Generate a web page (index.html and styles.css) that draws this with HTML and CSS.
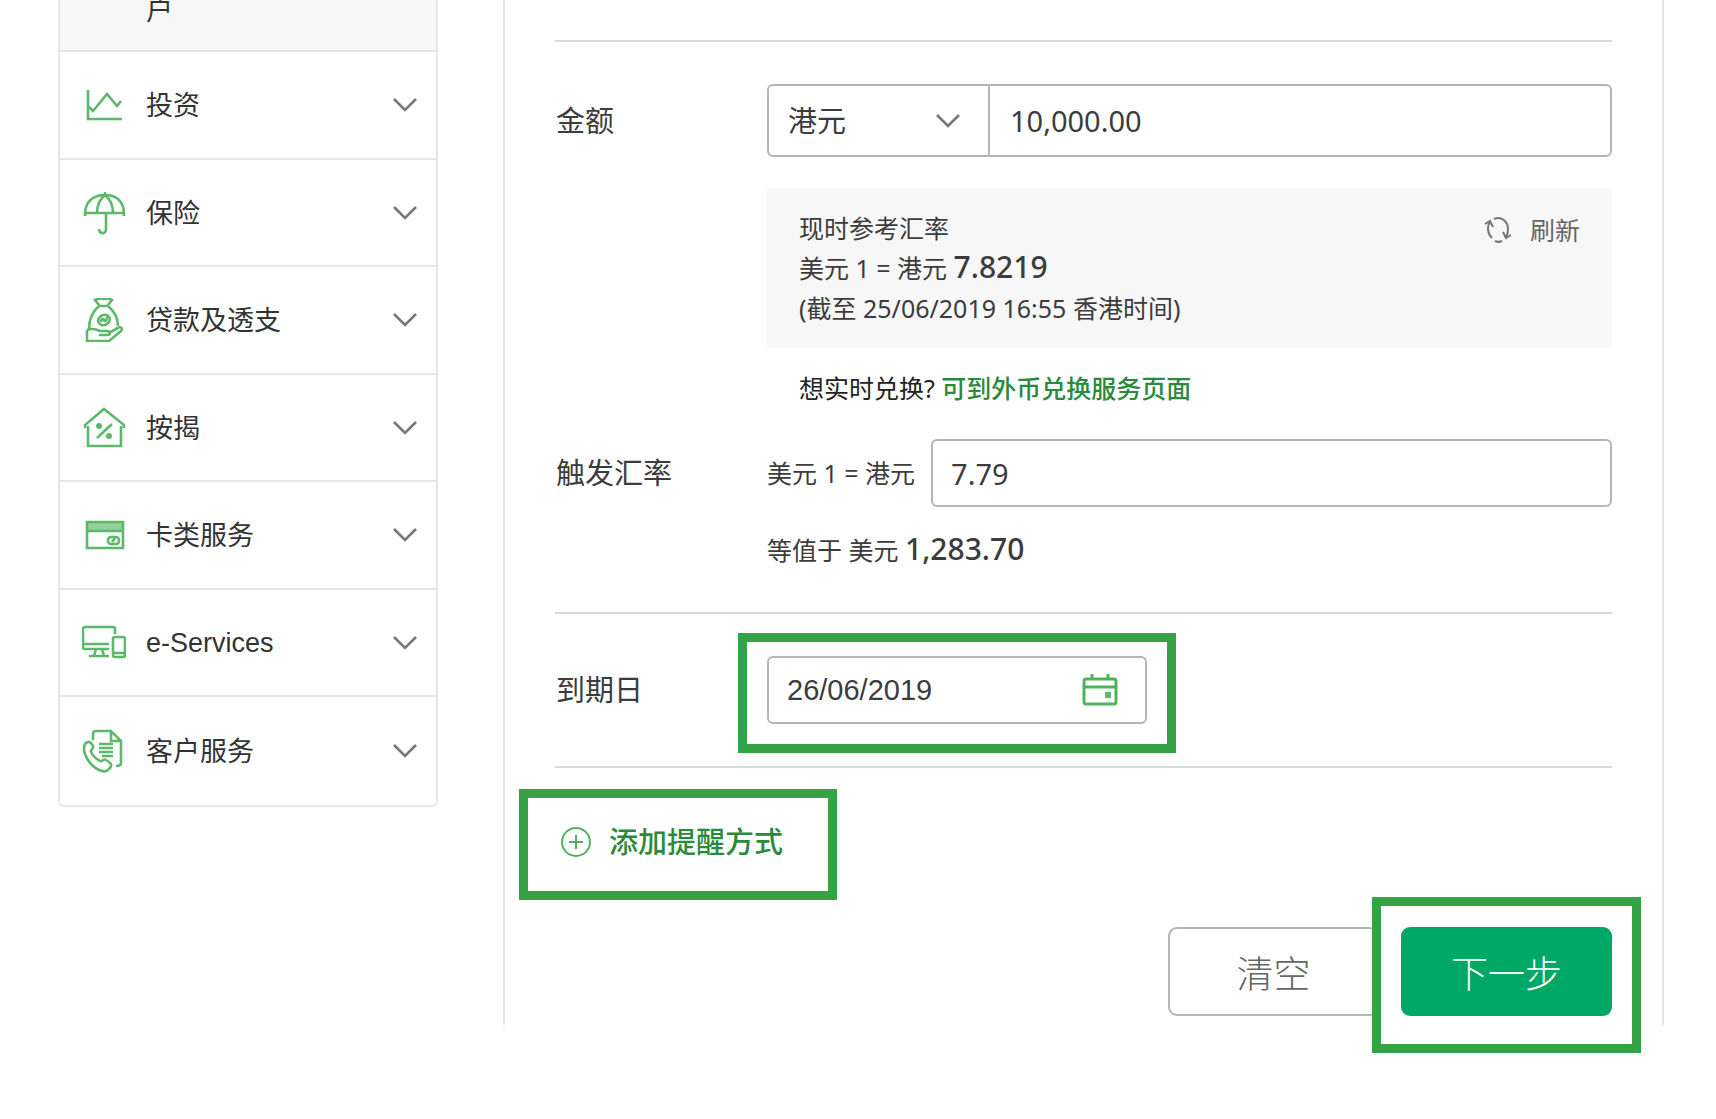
FILE: index.html
```html
<!DOCTYPE html>
<html lang="zh-CN">
<head>
    <meta charset="UTF-8">
    <meta name="viewport" content="width=device-width, initial-scale=1.0">
    <title>外币兑换</title>
    <link rel="stylesheet" href="styles.css">
</head>
<body>
    <!-- Chevron shared by the menu and the drop-down -->
    <svg class="symbols" aria-hidden="true">
        <symbol id="chevron" viewBox="0 0 24 16">
            <path d="M1 2 L12 13 L23 2" fill="none" stroke="#777" stroke-width="2.6"/>
        </symbol>
    </svg>

    <div class="page">
        <nav class="sidebar">
            <a class="menu-item active" href="#"><span class="menu-text">户</span></a>
            <a class="menu-item" href="#">
                <svg class="menu-icon" viewBox="0 0 44 44">
                    <path d="M6 7v29h34M6 23l5 5L25 11l10 12 4-5"/>
                </svg>
                <span class="menu-text">投资</span>
                <svg class="chevron"><use href="#chevron"/></svg>
            </a>
            <a class="menu-item" href="#">
                <svg class="menu-icon" viewBox="0 0 44 44">
                    <path d="M3 25v-2C3 11 11 4 23 4s19 7 19 19v2M3 22h39M23 1v3M24 22v16c0 6-7 5-7 0M15 22c0-9 3-14 8-18 5 4 8 9 8 18"/>
                </svg>
                <span class="menu-text">保险</span>
                <svg class="chevron"><use href="#chevron"/></svg>
            </a>
            <a class="menu-item" href="#">
                <svg class="menu-icon" viewBox="0 0 44 44">
                    <path d="M17 7l-4-5q4-2 9-1 5-1 8 1l-4 5M17 8h9M17 8C10 14 7 22 7 31M26 8c7 6 10 13 10 20"/>
                    <ellipse cx="22" cy="22" rx="6" ry="5" transform="rotate(-25 22 22)"/>
                    <path d="M19 24q1-5 3-2t3-3"/>
                    <path d="M5 32c5-2 9-1 13 1h7c4 0 4 4 0 4h-8M27 35l9-5c3-2 5 1 3 3L27 43H5V32"/>
                </svg>
                <span class="menu-text">贷款及透支</span>
                <svg class="chevron"><use href="#chevron"/></svg>
            </a>
            <a class="menu-item" href="#">
                <svg class="menu-icon" viewBox="0 0 44 44">
                    <path d="M6 20v20h33V20M3 22v-3L22 3l20 16v3M15 32l15-14"/>
                    <circle class="solid" cx="17" cy="20" r="3"/>
                    <circle class="solid" cx="27" cy="30" r="3"/>
                </svg>
                <span class="menu-text">按揭</span>
                <svg class="chevron"><use href="#chevron"/></svg>
            </a>
            <a class="menu-item" href="#">
                <svg class="menu-icon" viewBox="0 0 44 44">
                    <path class="tint" d="M5 9h36v9H5z"/>
                    <path d="M5 9h36v26H5zM5 18h36"/>
                    <rect x="26" y="24" width="11" height="7" rx="3"/>
                    <path d="M30 29l3-4"/>
                </svg>
                <span class="menu-text">卡类服务</span>
                <svg class="chevron"><use href="#chevron"/></svg>
            </a>
            <a class="menu-item" href="#">
                <svg class="menu-icon" viewBox="0 0 44 44">
                    <path d="M33 13V8q0-2-2-2H3Q1 6 1 8v18q0 2 2 2h24M1 23h26M14 28l-2 7M20 28l2 7M7 35h20"/>
                    <rect x="31" y="16" width="12" height="20" rx="2"/>
                    <path d="M31 32h12"/>
                </svg>
                <span class="menu-text latin">e-Services</span>
                <svg class="chevron"><use href="#chevron"/></svg>
            </a>
            <a class="menu-item" href="#">
                <svg class="menu-icon" viewBox="0 0 44 44">
                    <path d="M11 11V5q0-3 3-3h15l10 10v22q0 3-5 3M29 2v10h9M17 15h14M17 19h14M17 23h14M20 27h11"/>
                    <path d="M3 15c3-4 6-2 8 2 1 3-3 4-2 6 2 4 5 7 9 9 3 1 3-3 6-1 5 3 7 5 3 9-4 5-12 1-17-4C4 30 0 21 3 15z"/>
                </svg>
                <span class="menu-text">客户服务</span>
                <svg class="chevron"><use href="#chevron"/></svg>
            </a>
        </nav>

        <form class="panel">
            <div class="section">
                <div class="row">
                    <label class="label" for="amount">金额</label>
                    <div class="field amount-field">
                        <div class="currency">
                            <select id="currency" aria-label="货币">
                                <option>港元</option>
                            </select>
                            <svg class="chevron"><use href="#chevron"/></svg>
                        </div>
                        <input class="amount-input" type="text" id="amount" value="10,000.00">
                    </div>
                </div>
                <div class="indent">
                    <div class="rate-box">
                        <div>
                            <p>现时参考汇率</p>
                            <p>美元 1 = 港元 <strong>7.8219</strong></p>
                            <p>(截至 25/06/2019 16:55 香港时间)</p>
                        </div>
                        <button type="button" class="refresh">
                            <svg class="refresh-icon" viewBox="0 0 28 28">
                                <path d="M8 22C3 17 3 10 6 6M1 8l5-3 3 6M10 3c7-3 14 2 14 10 0 3 0 5-2 8M27 19l-5 3-3-6M18 25c-2 1-5 1-7 0"/>
                            </svg>
                            刷新
                        </button>
                    </div>
                    <p class="hint">想实时兑换? <a href="#">可到外币兑换服务页面</a></p>
                </div>
                <div class="row">
                    <label class="label" for="trigger">触发汇率</label>
                    <div class="trigger">
                        <span>美元 1 = 港元</span>
                        <input class="field" type="text" id="trigger" value="7.79">
                    </div>
                </div>
                <div class="indent">
                    <p class="equivalent">等值于 美元 <strong>1,283.70</strong></p>
                </div>
            </div>

            <div class="section">
                <div class="row">
                    <label class="label" for="expiry">到期日</label>
                    <div class="highlight date-highlight">
                        <div class="field date-field">
                            <input type="text" id="expiry" value="26/06/2019">
                            <button type="button" aria-label="选择日期">
                                <svg class="calendar-icon" viewBox="0 0 36 32">
                                    <rect x="2" y="5" width="32" height="25" rx="2"/>
                                    <path d="M2 13h32M10 0v5M26 0v5"/>
                                    <rect class="solid" x="23" y="18" width="6" height="6"/>
                                </svg>
                            </button>
                        </div>
                    </div>
                </div>
            </div>

            <div class="section last">
                <div class="highlight reminder-highlight">
                    <button type="button" class="reminder">
                        <svg class="plus-icon" viewBox="0 0 30 30">
                            <circle cx="15" cy="15" r="14"/>
                            <path d="M15 8v14M8 15h14"/>
                        </svg>
                        添加提醒方式
                    </button>
                </div>
                <div class="actions">
                    <button type="reset" class="btn btn-clear">清空</button>
                    <div class="highlight next-highlight">
                        <button type="button" class="btn btn-next">下一步</button>
                    </div>
                </div>
            </div>
        </form>
    </div>
</body>
</html>
```

FILE: styles.css
```css
* {
    box-sizing: border-box;
}
body {
    margin: 0;
    min-height: 100vh;
    background-color: #fff;
    color: #3c3c3c;
    font-family: "Noto Sans", "Noto Sans CJK SC", sans-serif;
    font-size: 25px;
    line-height: 40px;
}
p {
    margin: 0;
}
strong {
    font-size: 30px;
    font-weight: 500;
    line-height: 30px;
}
button,
input,
select {
    font-family: inherit;
    color: inherit;
    background: none;
    border: none;
    margin: 0;
    padding: 0;
}
button {
    cursor: pointer;
}
.symbols {
    display: none;
}
.page {
    display: flex;
    align-items: flex-start;
    gap: 65px;
    padding: 0 52px 90px 58px;
}

/* Side menu */
.sidebar {
    flex: 0 0 380px;
    border: 2px solid #e6e6e6;
    border-top: none;
    border-radius: 0 0 6px 6px;
}
.menu-item {
    display: flex;
    align-items: center;
    gap: 20px;
    height: 108px;
    padding: 0 19px 0 22px;
    border-bottom: 2px solid #e6e6e6;
    color: #333;
    font-size: 27px;
    text-decoration: none;
}
.menu-item:nth-child(odd) {
    height: 107px;
}
.menu-item:last-child {
    border-bottom: none;
}
.menu-item.active {
    height: 52px;
    padding: 0 20px 30px 86px;
    background-color: #f7f7f7;
    line-height: 20px;
}
.menu-text {
    flex: 1;
}
.latin {
    font-family: "Liberation Sans", Arial, sans-serif;
}
.menu-icon {
    width: 44px;
    height: 44px;
    fill: none;
    stroke: #5cb96b;
    stroke-width: 2.6;
}
.solid {
    fill: #5cb96b;
    stroke: none;
}
.tint {
    fill: #94d09d;
    stroke: none;
}
.chevron {
    width: 24px;
    height: 16px;
}

/* Form */
.panel {
    flex: 1;
    padding: 40px 50px 9px;
    border-left: 2px solid #e6e6e6;
    border-right: 2px solid #e6e6e6;
}
.section {
    padding: 42px 0;
    border-top: 2px solid #d9d9d9;
}
.section.last {
    padding: 54px 0 0;
}
.row {
    display: grid;
    grid-template-columns: 212px 1fr;
    align-items: center;
}
.indent {
    margin-left: 212px;
}
.label {
    padding-left: 1px;
    font-size: 29px;
}
.field {
    height: 68px;
    border: 2px solid #b5b5b5;
    border-radius: 6px;
    font-size: 29px;
}
.amount-field {
    display: flex;
    height: 73px;
}
.currency {
    position: relative;
    flex: 0 0 221px;
    border-right: 2px solid #b5b5b5;
}
.currency select {
    width: 100%;
    height: 100%;
    padding-left: 19px;
    font-size: 29px;
    appearance: none;
}
.currency .chevron {
    position: absolute;
    top: 27px;
    right: 28px;
    pointer-events: none;
}
.amount-input {
    flex: 1;
    min-width: 0;
    padding-left: 20px;
    font-size: 29px;
}
.rate-box {
    display: flex;
    justify-content: space-between;
    align-items: flex-start;
    margin-top: 31px;
    padding: 20px 32px;
    border-radius: 4px;
    background-color: #f7f7f7;
}
.refresh {
    display: flex;
    align-items: center;
    gap: 18px;
    color: #666;
    font-size: 25px;
    line-height: 44px;
}
.refresh-icon {
    width: 28px;
    height: 28px;
    fill: none;
    stroke: #777;
    stroke-width: 2;
}
.hint {
    padding: 20px 0 31px 32px;
    color: #222;
}
.hint a {
    color: #2a8a3c;
    font-weight: 500;
    text-decoration: none;
}
.trigger {
    display: flex;
    align-items: center;
    gap: 16px;
}
.trigger .field {
    flex: 1;
    min-width: 0;
    padding-left: 18px;
}
.equivalent {
    padding-top: 23px;
}
.date-field {
    display: flex;
    align-items: center;
    width: 380px;
    padding: 0 27px 0 18px;
    font-family: "Liberation Sans", Arial, sans-serif;
}
.date-field input {
    flex: 1;
    min-width: 0;
    font-size: 29px;
}
.calendar-icon,
.plus-icon {
    display: block;
    fill: none;
    stroke: #4db45e;
    stroke-width: 3;
}
.calendar-icon {
    width: 36px;
    height: 32px;
}
.plus-icon {
    width: 30px;
    height: 30px;
    stroke-width: 2;
}
.reminder {
    display: flex;
    align-items: center;
    gap: 18px;
    padding-left: 6px;
    color: #2a8a3c;
    font-size: 29px;
    font-weight: 500;
    line-height: 40px;
}
.actions {
    display: flex;
    justify-content: flex-end;
    gap: 22px;
    margin-top: 65px;
}
.btn {
    width: 211px;
    height: 89px;
    border-radius: 9px;
    font-size: 37px;
    font-weight: 300;
}
.btn-clear {
    border: 2px solid #b5b5b5;
    color: #666;
}
.btn-next {
    display: block;
    background-color: #00a865;
    color: #fff;
}

/* Green frames around the steps to follow */
.highlight {
    position: relative;
    z-index: 0;
    width: fit-content;
}
.highlight::before {
    content: "";
    position: absolute;
    z-index: -1;
    border: 9px solid #35a345;
    background-color: #fff;
}
.date-highlight::before {
    inset: -23px -29px -29px;
}
.reminder-highlight::before {
    inset: -33px -54px -38px -36px;
}
.next-highlight::before {
    inset: -30px -29px -37px;
}
```
